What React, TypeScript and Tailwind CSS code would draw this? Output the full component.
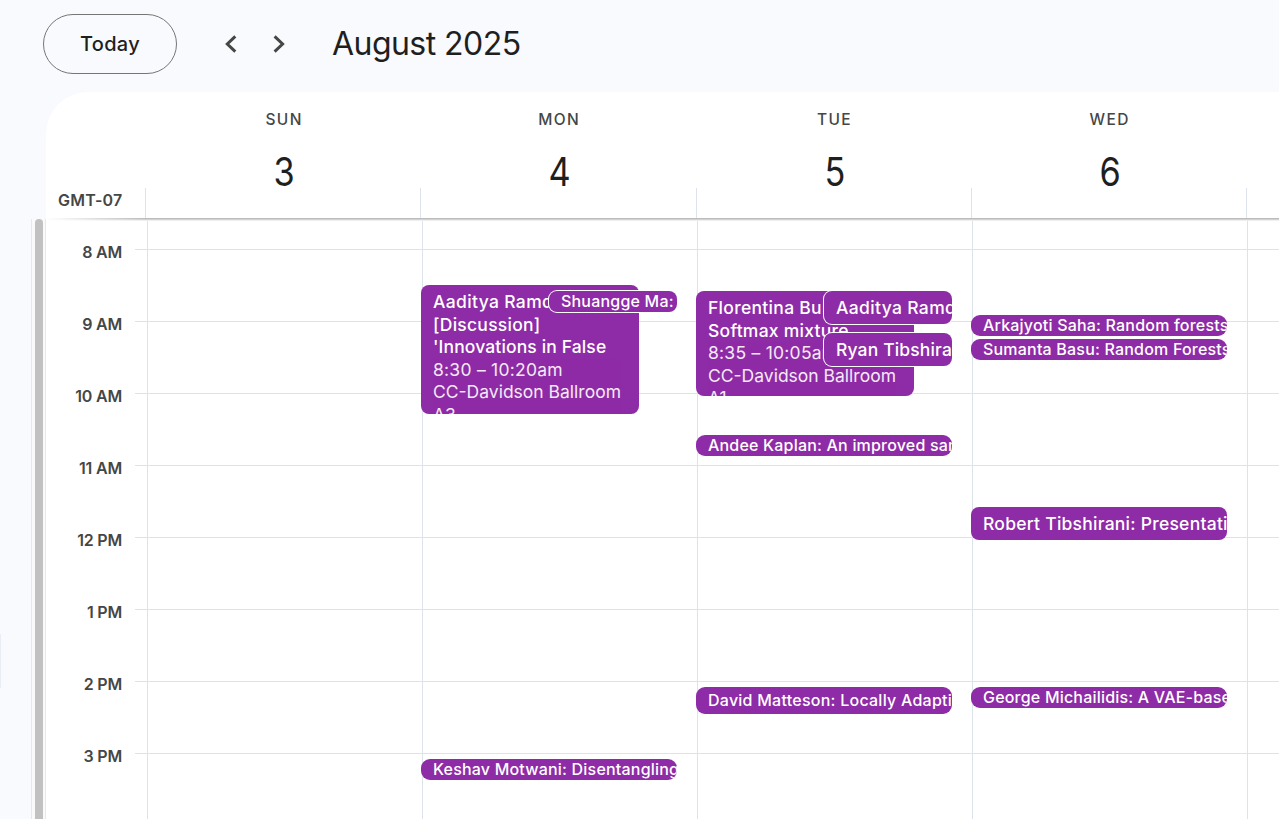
import type { ReactNode } from "react";

const HOURS = ["8 AM", "9 AM", "10 AM", "11 AM", "12 PM", "1 PM", "2 PM", "3 PM"];

function Event({ box, text, children }: { box: string; text: string; children: ReactNode }) {
  return (
    <div className={`absolute overflow-hidden whitespace-nowrap bg-[#8e2ba6] pl-3 text-white ${box}`}>
      <div className={text}>{children}</div>
    </div>
  );
}

const BLOCK = "pt-[6px] font-medium text-[17.5px] leading-[22.5px] tracking-[0.13px]";
const MEDIUM = "font-medium text-[17.5px] leading-[33px]";
const SMALL = "font-medium text-[16px] leading-[20px] tracking-[0.2px]";

function DayHeader({ name, date }: { name: string; date: string }) {
  return (
    <div className="flex w-[275.2px] shrink-0 flex-col items-center pl-[3px]">
      <div className="mt-[18px] h-5 text-[15.5px] font-medium leading-5 tracking-[1.4px] text-[#444746]">{name}</div>
      <div className="mt-[22px] h-10 scale-x-[0.88] text-[39px] leading-10 text-[#1f1f1f]">{date}</div>
    </div>
  );
}

export default function App() {
  return (
    <div className="flex h-[819px] w-[1279px] flex-col overflow-hidden bg-[#f8fafd] font-['Inter',sans-serif] text-[#1f1f1f]">
      <header className="flex h-[92px] shrink-0 items-start pl-[43px] pt-[14px]">
        <button className="flex h-[60px] w-[134px] items-center justify-center rounded-full border border-[#747775] text-[20px] font-medium tracking-[0.3px]">
          Today
        </button>
        <div className="ml-[42px] flex h-[60px] items-center">
          <svg width="24" height="24" viewBox="0 0 24 24" fill="none" stroke="#444746" strokeWidth="3">
            <path d="M16.3 4.3 8.3 12l8 7.7" />
          </svg>
          <svg className="ml-6" width="24" height="24" viewBox="0 0 24 24" fill="none" stroke="#444746" strokeWidth="3">
            <path d="M7.6 4.3 15.6 12l-8 7.7" />
          </svg>
        </div>
        <h1 className="ml-[41px] text-[32px] font-normal leading-[60px] tracking-[-0.55px]">August 2025</h1>
      </header>

      <div className="relative z-10 ml-[46px] flex h-[127px] shrink-0 rounded-tl-[42px] bg-white">
        <div className="flex w-[99px] shrink-0 items-end pb-[9px] pl-3 text-[16px] font-semibold leading-5 tracking-[0.2px] text-[#444746]">
          GMT-07
        </div>
        <div className="flex">
          <DayHeader name="SUN" date="3" />
          <DayHeader name="MON" date="4" />
          <DayHeader name="TUE" date="5" />
          <DayHeader name="WED" date="6" />
        </div>
        <div className="absolute bottom-0 left-[99px] flex h-[31px]">
          <div className="w-[275px] border-l border-[#dde3ea]" />
          <div className="w-[276px] border-l border-[#dde3ea]" />
          <div className="w-[275px] border-l border-[#dde3ea]" />
          <div className="w-[275px] border-l border-[#dde3ea]" />
          <div className="border-l border-[#dde3ea]" />
        </div>
        <div className="absolute bottom-0 left-0 right-0 h-px bg-linear-to-r from-white to-[#bcbcbc] to-[100px]" />
        <div className="absolute left-0 right-0 top-full h-px bg-linear-to-r from-white to-[#d2d2d2] to-[100px]" />
        <div className="absolute left-0 right-0 top-[128px] h-px bg-linear-to-r from-white to-[#efefef] to-[100px]" />
      </div>

      <div className="flex min-h-0 flex-1">
        <div className="w-[31px] shrink-0 pt-[415px]">
          <div className="h-[54px] w-px bg-[#e9eef6]" />
        </div>
        <div className="w-[15px] shrink-0 border-x border-[#e8e8e8] bg-[#fafafa] px-[3px]">
          <div className="h-full w-2 rounded-t-full bg-[#c1c1c1]" />
        </div>
        <div className="w-[101px] shrink-0 overflow-hidden bg-white pt-[23px]">
          {HOURS.map((hour) => (
            <div key={hour} className="h-[72px] pr-[25px] text-right text-[16px] font-semibold leading-5 tracking-[-0.2px] text-[#444746]">
              {hour}
            </div>
          ))}
        </div>
        <div className="relative flex-1 bg-white">
          <div className="absolute -left-3 right-0 top-0 pt-[30px]">
            {HOURS.map((hour) => (
              <div key={hour} className="h-[72px] border-t border-[#dde3ea]" />
            ))}
          </div>
          <div className="relative flex h-full">
            <div className="w-[275px] shrink-0 border-l border-[#dde3ea]" />

            <div className="relative w-[275px] shrink-0 border-l border-[#dde3ea]">
              <Event box="-left-[2px] top-[66px] h-[129px] w-[218px] rounded-lg" text={BLOCK}>
                <span className="tracking-[0.35px]">Aaditya Ramdas:</span>
                <br />
                <span className="tracking-[0.25px]">[Discussion]</span>
                <br />
                'Innovations in False
                <div className="font-normal tracking-[0px] opacity-90">
                  <span className="tracking-[0.25px]">8:30 – 10:20am</span>
                  <br />
                  CC-Davidson Ballroom
                  <br />
                  A3
                </div>
              </Event>
              <Event box="left-[126px] top-[72px] h-[21px] w-[128px] rounded-lg ring-1 ring-white" text={SMALL}>
                Shuangge Ma:
              </Event>
              <Event box="-left-[2px] top-[540px] h-[21px] w-[256px] rounded-[9px]" text={SMALL}>
                Keshav Motwani: Disentangling
              </Event>
            </div>

            <div className="relative w-[275px] shrink-0 border-l border-[#dde3ea]">
              <Event box="-left-[2px] top-[72px] h-[105px] w-[218px] rounded-lg" text={BLOCK}>
                <span className="tracking-[0.3px]">Florentina Bunea:</span>
                <br />
                <span className="tracking-[0.25px]">Softmax mixture</span>
                <div className="font-normal tracking-[0px] opacity-90">
                  <span className="tracking-[0.25px]">8:35 – 10:05am</span>
                  <br />
                  CC-Davidson Ballroom
                  <br />
                  A1
                </div>
              </Event>
              <Event box="left-[126px] top-[72px] h-[33px] w-[128px] rounded-lg ring-1 ring-white" text={`${MEDIUM} tracking-[0.35px]`}>
                Aaditya Ramdas
              </Event>
              <Event box="left-[126px] top-[114px] h-[33px] w-[128px] rounded-lg ring-1 ring-white" text={`${MEDIUM} tracking-[0.15px]`}>
                Ryan Tibshirani
              </Event>
              <Event box="-left-[2px] top-[216px] h-[21px] w-[256px] rounded-[9px]" text={SMALL}>
                Andee Kaplan: An improved sampler
              </Event>
              <Event box="-left-[2px] top-[468px] h-[27px] w-[256px] rounded-[9px]" text="font-medium text-[16px] leading-[26px] tracking-[0.25px]">
                David Matteson: Locally Adaptive
              </Event>
            </div>

            <div className="relative w-[275px] shrink-0 border-l border-[#dde3ea]">
              <Event box="-left-[2px] top-[96px] h-[21px] w-[256px] rounded-[9px]" text={SMALL}>
                Arkajyoti Saha: Random forests
              </Event>
              <Event box="-left-[2px] top-[120px] h-[21px] w-[256px] rounded-[9px]" text={SMALL}>
                Sumanta Basu: Random Forests
              </Event>
              <Event box="-left-[2px] top-[288px] h-[33px] w-[256px] rounded-lg" text={`${MEDIUM} tracking-[0.25px]`}>
                Robert Tibshirani: Presentation
              </Event>
              <Event box="-left-[2px] top-[468px] h-[21px] w-[256px] rounded-[9px]" text={SMALL}>
                George Michailidis: A VAE-based
              </Event>
            </div>

            <div className="flex-1 border-l border-[#dde3ea]" />
          </div>
        </div>
      </div>
    </div>
  );
}
